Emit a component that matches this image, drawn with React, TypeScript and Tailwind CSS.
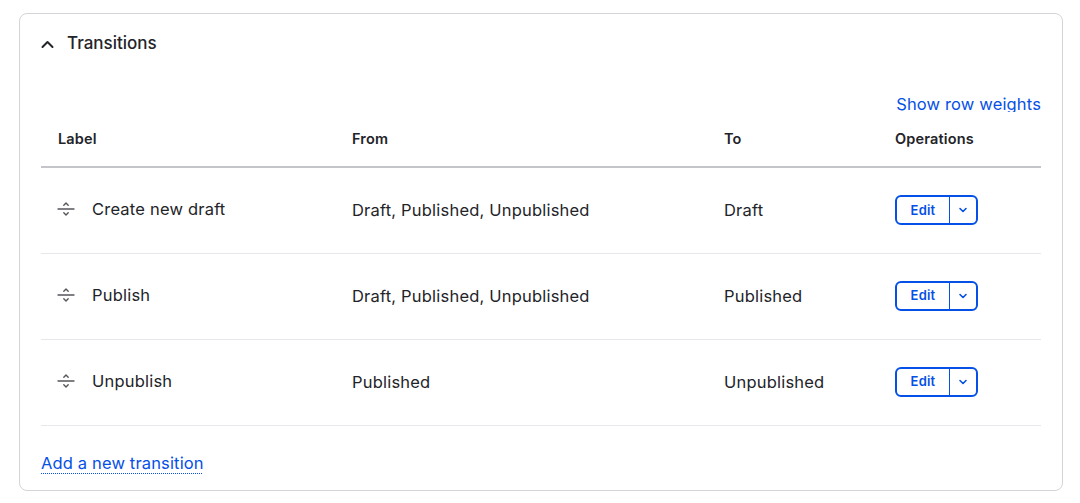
import React from 'react';

const rows = [
  { label: 'Create new draft', from: 'Draft, Published, Unpublished', to: 'Draft' },
  { label: 'Publish', from: 'Draft, Published, Unpublished', to: 'Published' },
  { label: 'Unpublish', from: 'Published', to: 'Unpublished' },
];

const DragHandle = () => (
  <svg width="18" height="18" viewBox="0 0 18 18" fill="none" stroke="#55565b" strokeWidth="1.4" strokeLinecap="round" strokeLinejoin="round">
    <path d="M1 9h16" />
    <path d="M6.8 5.2L9 3l2.2 2.2" />
    <path d="M6.8 12.8L9 15l2.2-2.2" />
  </svg>
);

const EditButton = () => (
  <div className="flex h-[30px] w-[83px] items-stretch rounded-[6px] border-2 border-[#0550e6] text-[#0550e6]">
    <button className="flex flex-1 items-center justify-center text-[13px] font-semibold tracking-[0.2px]">Edit</button>
    <div className="w-px bg-[#0550e6]" />
    <button className="flex w-[26px] items-center justify-center">
      <svg width="10" height="10" viewBox="0 0 10 10" fill="none" stroke="#0550e6" strokeWidth="1.6" strokeLinecap="round" strokeLinejoin="round">
        <path d="M2 3.5L5 6.5l3-3" />
      </svg>
    </button>
  </div>
);

export default function App() {
  return (
    <div className="min-h-screen bg-white px-[19px] pt-[13px] text-[#232429] font-['Inter','Liberation_Sans',sans-serif]">
      <div className="w-[1044px] rounded-lg border border-[#d4d4d8] bg-white">
        {/* Summary */}
        <div className="flex h-[60px] items-center gap-[13px] px-[21px]">
          <svg width="13" height="13" viewBox="0 0 13 13" fill="none" stroke="#232429" strokeWidth="2" strokeLinecap="round" strokeLinejoin="round">
            <path d="M1.5 9L6.5 4l5 5" />
          </svg>
          <span className="text-[17px] font-medium">Transitions</span>
        </div>

        <div className="px-[21px]">
          <div className="mt-[20px] flex h-[18px] justify-end overflow-hidden">
            <a className="text-[16.5px] leading-[21px] tracking-[0.15px] text-[#0550e6]">Show row weights</a>
          </div>

          <table className="w-full border-collapse text-left">
            <thead>
              <tr className="h-[55px] border-b-2 border-[#c4c5c9] text-[14.5px] font-semibold tracking-[0.15px]">
                <th className="w-[294px] pl-[17px] font-semibold">Label</th>
                <th className="w-[372px] pl-[17px] font-semibold">From</th>
                <th className="w-[171px] pl-[17px] font-semibold">To</th>
                <th className="pl-[17px] font-semibold">Operations</th>
              </tr>
            </thead>
            <tbody className="text-[16.5px] tracking-[0.2px]">
              {rows.map((r) => (
                <tr key={r.label} className="h-[86px] border-b border-[#e6e7ea]">
                  <td className="pl-[16px]">
                    <div className="-mt-[2px] flex items-center gap-[17px]">
                      <DragHandle />
                      <span>{r.label}</span>
                    </div>
                  </td>
                  <td className="pl-[17px]">{r.from}</td>
                  <td className="pl-[17px]">{r.to}</td>
                  <td className="pl-[17px]">
                    <EditButton />
                  </td>
                </tr>
              ))}
            </tbody>
          </table>

          <div className="mt-[25px] pb-[15px]">
            <a className="text-[16.5px] leading-[24px] tracking-[0.15px] text-[#0550e6] underline decoration-dotted decoration-1 underline-offset-[4px]">
              Add a new transition
            </a>
          </div>
        </div>
      </div>
    </div>
  );
}
